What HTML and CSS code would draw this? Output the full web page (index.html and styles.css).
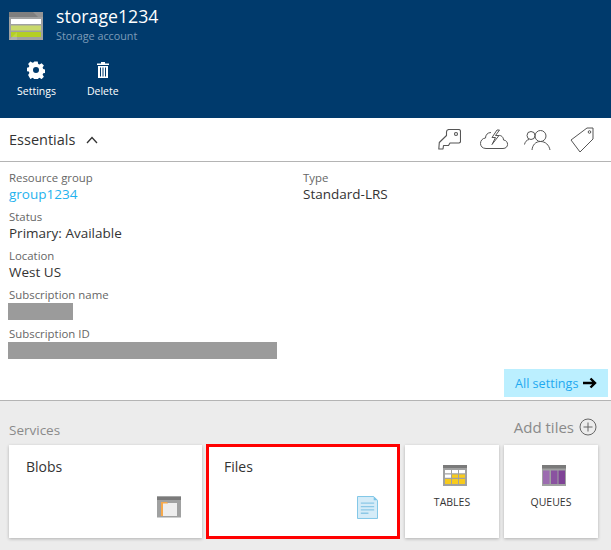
FILE: index.html
```html
<!DOCTYPE html>
<html lang="en">
<head>
    <meta charset="UTF-8">
    <meta name="viewport" content="width=device-width, initial-scale=1.0">
    <title>storage1234</title>
    <link rel="stylesheet" href="styles.css">
</head>
<body>
    <header class="blade-header">
        <div class="blade-title">
            <svg class="storage-icon" width="34" height="30" viewBox="0 0 34 30">
                <rect x="0" y="1" width="34" height="28" fill="#a0a1a1"/>
                <rect x="0" y="1" width="34" height="5" fill="#7f7f7f"/>
                <polygon points="24,1 34,1 34,6 29,6" fill="#949494"/>
                <rect x="2" y="8" width="30" height="5" fill="#ffffff"/>
                <rect x="2" y="14.500" width="30" height="5" fill="#c9d96a"/>
                <rect x="2" y="21" width="30" height="5" fill="#b4cf24"/>
                <polygon points="0,29 8,21 8,29" fill="#ffffff" opacity="0.15"/>
            </svg>
            <div>
                <div class="blade-name">storage1234</div>
                <div class="blade-sub">Storage account</div>
            </div>
        </div>
        <div class="commands">
            <div class="command">
                <div class="command-icon">
                    <svg width="18" height="18" viewBox="0 0 18 18">
                        <path fill="#fff" fill-rule="evenodd" d="M7.300 0.500h3.400l.5 2.400 1.300.6 2.100-1.300 2.300 2.400-1.300 2 .6 1.400 2.300.5v3.300l-2.300.5-.6 1.400 1.300 2-2.300 2.400-2.100-1.300-1.300.6-.5 2.400H7.300l-.5-2.400-1.300-.6-2.100 1.300L1.100 14l1.300-2-.6-1.400-2.300-.5V6.800l2.300-.5.6-1.400-1.300-2 2.300-2.400 2.100 1.300 1.300-.6zM9 6a3 3 0 1 0 0 6 3 3 0 0 0 0-6z"/>
                    </svg>
                </div>
                <span>Settings</span>
            </div>
            <div class="command">
                <div class="command-icon">
                    <svg width="12" height="16" viewBox="0 0 12 16">
                        <path fill="#fff" fill-rule="evenodd" d="M4 0h4v1.500h4v1.500H0V1.500h4zM1 4h10v12H1zM3 5.500v9h1v-9zM5.500 5.500v9h1v-9zM8 5.500v9h1v-9z"/>
                    </svg>
                </div>
                <span>Delete</span>
            </div>
        </div>
    </header>

    <div class="essentials-bar">
        <div class="essentials-title">
            Essentials
            <svg width="12" height="8" viewBox="0 0 12 8"><path d="M1 7l5-5.500L11 7" fill="none" stroke="#333" stroke-width="1.300"/></svg>
        </div>
        <div class="essentials-icons">
            <svg class="icon-key" width="23" height="21" viewBox="0 0 23 21" fill="none" stroke="#555" stroke-width="1.100" stroke-linejoin="round">
                <path d="M11 .5h9.500q2 0 2 2v10q0 1-1.500 1.500h-9l-1.500 2.500h-5l-.5 3.500H.8l.5-6.500 7.200-7V3q0-2.500 2.500-2.500z"/>
                <circle cx="18" cy="5" r="1.500"/>
            </svg>
            <svg class="icon-cloud" width="30" height="21" viewBox="0 0 30 21" fill="none" stroke="#555" stroke-width="1">
                <path d="M7 19.500h17c6 0 6-8 .5-8.500 0-3-2.500-5-5-4.500M12 3.500c-3.500 0-5.500 2.500-5.500 5.500-6.500.5-7 10.500.5 10.500"/>
                <path d="M18 1l-5 7.500h3.500l-3.500 7 7-9h-3.500l4-5.500z" stroke-linejoin="round"/>
            </svg>
            <svg class="icon-people" width="27" height="20" viewBox="0 0 27 20" fill="none" stroke="#555" stroke-width="1">
                <circle cx="7" cy="5.500" r="4"/>
                <circle cx="16.500" cy="6" r="5.500"/>
                <path d="M.5 14.500c.5-2.500 2-4.500 4.500-5M8 20c.5-5 3.500-8.500 8.500-8.500s8.500 3.500 9.500 8.500"/>
            </svg>
            <svg class="icon-tag" width="24" height="26" viewBox="0 0 24 26" fill="none" stroke="#555" stroke-width="1" stroke-linejoin="round">
                <path d="M17 1h6v11L10 25 1 13z"/>
                <circle cx="19.500" cy="5" r="1.300"/>
            </svg>
        </div>
    </div>

    <section class="props">
        <div class="props-col">
            <div class="prop"><div class="prop-label">Resource group</div><div class="prop-value prop-link">group1234</div></div>
            <div class="prop"><div class="prop-label">Status</div><div class="prop-value">Primary: Available</div></div>
            <div class="prop"><div class="prop-label">Location</div><div class="prop-value">West US</div></div>
            <div class="prop"><div class="prop-label">Subscription name</div><div class="redacted redacted-name"></div></div>
            <div class="prop"><div class="prop-label">Subscription ID</div><div class="redacted redacted-id"></div></div>
        </div>
        <div class="props-col">
            <div class="prop"><div class="prop-label">Type</div><div class="prop-value">Standard-LRS</div></div>
        </div>
    </section>

    <div class="settings-row">
        <div class="all-settings">
            All settings
            <svg width="14" height="12" viewBox="0 0 14 12"><path d="M0 6h12M7.500 1.500L12 6l-4.500 4.500" fill="none" stroke="#000" stroke-width="2.400"/></svg>
        </div>
    </div>

    <section class="services">
        <div class="services-head">
            <span class="services-title">Services</span>
            <span class="add-tiles">
                Add tiles
                <svg width="18" height="18" viewBox="0 0 18 18" fill="none" stroke="#666" stroke-width="1"><circle cx="9" cy="9" r="8"/><path d="M9 4.500v9M4.500 9h9"/></svg>
            </span>
        </div>
        <div class="tiles">
            <div class="tile tile-wide">
                <div class="tile-name">Blobs</div>
                <svg class="tile-icon" width="24" height="22" viewBox="0 0 24 22">
                    <rect width="24" height="21" y="0.500" fill="#a0a1a1"/>
                    <rect width="24" height="3.500" y="0.500" fill="#7a7a7a"/>
                    <rect x="4" y="7" width="16" height="13" fill="#eeeeee"/>
                    <path d="M4 20V6h6l1 1.500h-5V20z" fill="#f7a94b"/>
                </svg>
            </div>
            <div class="tile tile-wide tile-selected">
                <div class="tile-name">Files</div>
                <svg class="tile-icon" width="21" height="23" viewBox="0 0 22 24">
                    <path d="M.500.500h17l4 4v19H.500z" fill="#d5ecf8" stroke="#7cc4e6"/>
                    <path d="M17.500.500v4h4z" fill="#7cc4e6"/>
                    <path d="M4 7.500h14M4 11h14M4 14.500h14M4 18h8" stroke="#8cc8e6" stroke-width="1.400"/>
                </svg>
            </div>
            <div class="tile tile-small">
                <svg class="tile-small-icon" width="24" height="21" viewBox="0 0 24 21">
                    <rect width="24" height="21" fill="#a0a1a1"/>
                    <rect width="24" height="3" fill="#7a7a7a"/>
                    <path d="M2 5h6v3.300H2zM9 5h6v3.300H9zM16 5h6v3.300h-6zM2 9.500h6v3.300H2z" fill="#fff"/>
                    <path d="M9 9.500h6v3.300H9zM16 9.500h6v3.300h-6zM2 14h6v5H2zM9 14h6v5H9zM16 14h6v5h-6z" fill="#f8cb1c"/>
                </svg>
                <div class="tile-caps">TABLES</div>
            </div>
            <div class="tile tile-small">
                <svg class="tile-small-icon" width="24" height="21" viewBox="0 0 24 21">
                    <rect width="24" height="21" fill="#a0a1a1"/>
                    <rect width="24" height="3.500" fill="#7a7a7a"/>
                    <path d="M1 5.500h6.500V19H1z" fill="#9c6cb0"/>
                    <path d="M9 5.500h6.500V19H9z" fill="#8a52a0"/>
                    <path d="M16.500 5.500H23V19h-6.500z" fill="#7f4396"/>
                </svg>
                <div class="tile-caps">QUEUES</div>
            </div>
        </div>
    </section>
</body>
</html>
```

FILE: styles.css
```css
html, body {
    height: 100%;
}

body {
    font-family: "Open Sans", "Noto Sans", sans-serif;
    background-color: #fff;
    color: #333;
    margin: 0;
    padding: 0;
    overflow: hidden;
}

.blade-header {
    background-color: #003a6c;
    color: #fff;
    height: 118px;
    box-sizing: border-box;
    padding: 3px 0 0 9px;
}

.blade-title {
    display: flex;
    align-items: flex-start;
    gap: 13px;
}

.storage-icon {
    margin-top: 8px;
}

.blade-name {
    font-size: 17.700px;
    line-height: 26px;
}

.blade-sub {
    font-size: 10.800px;
    line-height: 14px;
    color: #7d9cb8;
}

.commands {
    display: flex;
    margin-top: 18px;
    padding-left: 8px;
    gap: 31px;
}

.command {
    display: flex;
    flex-direction: column;
    align-items: center;
    gap: 5px;
    font-size: 10.500px;
    line-height: 14px;
}

.command-icon {
    height: 18px;
    display: flex;
    align-items: center;
}

.essentials-bar {
    display: flex;
    justify-content: space-between;
    align-items: center;
    height: 44px;
    box-sizing: border-box;
    border-bottom: 1px solid #b4b4b4;
    padding: 0 9px;
}

.essentials-title {
    font-size: 14.500px;
    display: flex;
    align-items: center;
    gap: 11px;
}

.essentials-icons {
    display: flex;
    align-items: center;
    padding-right: 8px;
}

.icon-cloud {
    margin-left: 18px;
}

.icon-people {
    margin-left: 15px;
}

.icon-tag {
    margin-left: 19px;
}

.props {
    display: grid;
    grid-template-columns: 294px 1fr;
    height: 207px;
    padding: 8px 0 0 9px;
    box-sizing: border-box;
}

.prop {
    height: 39px;
}

.prop-label {
    font-size: 11.400px;
    line-height: 16px;
    color: #666;
}

.prop-value {
    font-size: 13.500px;
    line-height: 17px;
    color: #333;
}

.prop-link {
    color: #1fb2ee;
}

.redacted {
    background-color: #9b9b9b;
    height: 17px;
    margin-left: -1px;
}

.redacted-name {
    width: 65px;
}

.redacted-id {
    width: 269px;
}

.settings-row {
    display: flex;
    justify-content: flex-end;
    padding-right: 3px;
    height: 31px;
}

.all-settings {
    background-color: #bbefff;
    color: #1fa9f0;
    font-size: 12.600px;
    width: 104px;
    height: 28px;
    box-sizing: border-box;
    padding-left: 11px;
    display: flex;
    align-items: center;
    gap: 5px;
    white-space: nowrap;
}

.services {
    background-color: #ececec;
    border-top: 1px solid #b4b4b4;
    height: 150px;
    box-sizing: border-box;
}

.services-head {
    display: flex;
    justify-content: space-between;
    align-items: center;
    height: 44px;
    box-sizing: border-box;
    padding: 14px 14px 0 9px;
    color: #8a8a8a;
    font-size: 13.500px;
}

.add-tiles {
    display: flex;
    align-items: center;
    gap: 5px;
    font-size: 15px;
    margin-top: -6px;
}

.tiles {
    display: flex;
    padding-left: 9px;
    gap: 5px;
}

.tile {
    background-color: #fff;
    height: 93px;
    box-sizing: border-box;
    box-shadow: 0 1px 3px rgba(0, 0, 0, 0.25);
}

.tile-wide {
    width: 193px;
    padding: 12px 17px;
    position: relative;
}

.tile-icon {
    position: absolute;
    right: 21px;
    bottom: 20px;
}

.tile-selected {
    width: 194px;
    height: 95px;
    margin: -1px 0 0 -1px;
    padding: 10px 15px;
    border: 3px solid #ff0000;
    box-shadow: none;
}

.tile-selected .tile-icon {
    right: 19px;
    bottom: 17px;
}

.tile-small {
    width: 94px;
    display: flex;
    flex-direction: column;
    align-items: center;
    padding-top: 20px;
    gap: 9px;
}

.tile-small-icon {
    margin-left: 5px;
}

.tile-name {
    font-size: 14px;
    line-height: 20px;
}

.tile-caps {
    font-size: 10.500px;
    line-height: 14px;
    color: #333;
}
```
